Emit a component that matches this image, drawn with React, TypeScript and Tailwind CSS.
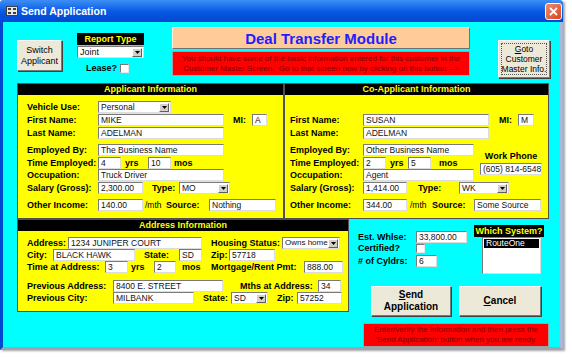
import React from "react";

type P = { className?: string; children?: React.ReactNode };

function Lbl({ className = "", children }: P) {
  return (
    <span className={`shrink-0 whitespace-nowrap text-[9px] font-bold leading-none text-black ${className}`}>
      {children}
    </span>
  );
}

function Txt({ className = "", children }: P) {
  return (
    <span className={`shrink-0 whitespace-nowrap text-[8.5px] leading-none text-black ${className}`}>
      {children}
    </span>
  );
}

function Field({ className = "", children }: P) {
  return (
    <div
      className={`h-full shrink-0 flex items-center overflow-hidden whitespace-nowrap bg-white border border-t-[#7a7a7a] border-l-[#7a7a7a] border-r-[#dcdcdc] border-b-[#dcdcdc] pl-[2px] text-[8.5px] leading-none text-[#111] ${className}`}
    >
      {children}
    </div>
  );
}

function Combo({ className = "", children }: P) {
  return (
    <div
      className={`h-full shrink-0 flex items-center bg-white border border-t-[#7a7a7a] border-l-[#7a7a7a] border-r-[#dcdcdc] border-b-[#dcdcdc] text-[8.5px] leading-none text-[#111] ${className}`}
    >
      <span className="flex-1 pl-[2px] overflow-hidden whitespace-nowrap">{children}</span>
      <span className="h-[9px] w-[10px] shrink-0 mr-[1px] flex items-center justify-center bg-[#d4d0c8] border border-t-white border-l-white border-r-[#606060] border-b-[#606060]">
        <svg width="5" height="3" viewBox="0 0 5 3">
          <path d="M0 0h5L2.5 3z" fill="#000" />
        </svg>
      </span>
    </div>
  );
}

function Check({ className = "" }: P) {
  return (
    <div
      className={`w-[9px] h-[9px] shrink-0 bg-white border border-t-[#7a7a7a] border-l-[#7a7a7a] border-r-[#e8e8e8] border-b-[#e8e8e8] ${className}`}
    />
  );
}

function Row({ className = "", children }: P) {
  return <div className={`flex items-center h-[12px] ${className}`}>{children}</div>;
}

function Header({ children }: P) {
  return (
    <div className="h-[11px] bg-black text-[#ffff00] text-[9px] font-bold leading-[11px] text-center">
      {children}
    </div>
  );
}

function WinButton({ className = "", children }: P) {
  return (
    <div
      className={`shrink-0 flex flex-col items-center justify-center bg-[#ece9d8] border border-t-white border-l-white border-r-[#7a7a7a] border-b-[#7a7a7a] shadow-[1px_1px_0_#404040] text-black ${className}`}
    >
      {children}
    </div>
  );
}

export default function App() {
  return (
    <div className="w-[572px] h-[357px] bg-white font-['Liberation_Sans',Arial,sans-serif]">
      <div className="w-[563px] h-[349px] flex flex-col shadow-[2px_2px_2px_rgba(0,0,0,0.35)]">
        {/* title bar */}
        <div className="h-[22px] shrink-0 flex items-center bg-gradient-to-b from-[#3d8ff5] via-[#0a5ae6] to-[#0047d1] rounded-t-[3px]">
          <svg className="ml-[6px]" width="12" height="10" viewBox="0 0 12 10">
            <rect x="0.5" y="0.5" width="11" height="9" fill="#e8e8e8" stroke="#404040" />
            <rect x="2" y="2" width="3" height="2" fill="#404040" />
            <rect x="7" y="2" width="3" height="2" fill="#404040" />
            <rect x="2" y="6" width="3" height="2" fill="#404040" />
            <rect x="7" y="6" width="3" height="2" fill="#404040" />
          </svg>
          <span className="ml-[3px] text-white text-[10.5px] font-bold leading-none">Send Application</span>
          <div className="ml-auto mr-[1px] w-[17px] h-[17px] flex items-center justify-center rounded-[3px] border border-white bg-gradient-to-br from-[#f08a6a] to-[#d6421c]">
            <svg width="9" height="9" viewBox="0 0 9 9">
              <path d="M1 1l7 7M8 1L1 8" stroke="#fff" strokeWidth="1.8" />
            </svg>
          </div>
        </div>

        {/* client area */}
        <div className="flex-1 flex flex-col bg-[#00ffff] border-l-[3px] border-l-[#0047d1] border-r-[3px] border-r-[#a9b8d8] border-b-[3px] border-b-[#a0a4b0]">
          {/* top strip */}
          <div className="h-[61px] shrink-0 flex items-start pl-[14px]">
            <WinButton className="mt-[18px] w-[45px] h-[31px] text-[9px] leading-[11px]">
              <span>Switch</span>
              <span>Applicant</span>
            </WinButton>

            <div className="ml-[15px] mt-[11px] w-[67px] flex flex-col">
              <div className="h-[12px] bg-black text-[#ffff00] text-[9px] font-bold leading-[12px] text-center">
                Report Type
              </div>
              <div className="h-[12px] mt-[1px]">
                <Combo className="w-[67px] text-[9px]">Joint</Combo>
              </div>
              <div className="mt-[6px] flex items-center pl-[9px]">
                <Lbl>Lease?</Lbl>
                <Check className="ml-[3px]" />
              </div>
            </div>

            <div className="ml-[28px] mt-[5px] w-[298px] flex flex-col">
              <div className="h-[22px] flex items-center justify-center bg-[#ffcc99] border border-t-[#fff2e0] border-l-[#fff2e0] border-r-[#707070] border-b-[#707070] text-[#1e1eff] text-[15px] font-bold leading-none">
                Deal Transfer Module
              </div>
              <div className="mt-[2px] h-[25px] flex flex-col items-center justify-center bg-[#ff0000] border border-[#a0a0a0] text-[#800000] text-[8px] leading-[10px]">
                <span>You should have some of the basic information entered for this customer in the</span>
                <span>Customer Master Screen.&nbsp; Go to that screen now by clicking on this button --&gt;</span>
              </div>
            </div>

            <WinButton className="ml-[28px] mt-[18px] w-[52px] h-[38px] text-[8.5px] leading-[10px]">
              <div className="border border-dotted border-[#555] flex flex-col items-center whitespace-nowrap">
                <span>
                  <span className="underline">G</span>oto
                </span>
                <span>Customer</span>
                <span>Master Info.</span>
              </div>
            </WinButton>
          </div>

          {/* applicant panels */}
          <div className="h-[136px] shrink-0 flex pl-[14px]">
            <div className="w-[267px] h-[136px] flex flex-col border border-[#505050] bg-[#ffff00]">
              <Header>Applicant Information</Header>
              <div className="flex flex-col pl-[9px]">
                <Row className="mt-[6px]">
                  <Lbl className="w-[71px]">Vehicle Use:</Lbl>
                  <Combo className="w-[73px]">Personal</Combo>
                </Row>
                <Row className="mt-[1px]">
                  <Lbl className="w-[71px]">First Name:</Lbl>
                  <Field className="w-[126px]">MIKE</Field>
                  <Lbl className="ml-[9px] w-[19px]">MI:</Lbl>
                  <Field className="w-[15px]">A</Field>
                </Row>
                <Row className="mt-[1px]">
                  <Lbl className="w-[71px]">Last Name:</Lbl>
                  <Field className="w-[126px]">ADELMAN</Field>
                </Row>
                <Row className="mt-[5px]">
                  <Lbl className="w-[71px]">Employed By:</Lbl>
                  <Field className="w-[126px]">The Business Name</Field>
                </Row>
                <Row className="mt-[1px]">
                  <Lbl className="w-[71px]">Time Employed:</Lbl>
                  <Field className="w-[23px]">4</Field>
                  <Lbl className="w-[27px] pl-[4px]">yrs</Lbl>
                  <Field className="w-[23px]">10</Field>
                  <Lbl className="pl-[3px]">mos</Lbl>
                </Row>
                <Row>
                  <Lbl className="w-[71px]">Occupation:</Lbl>
                  <Field className="w-[126px]">Truck Driver</Field>
                </Row>
                <Row className="mt-[1px]">
                  <Lbl className="w-[71px]">Salary (Gross):</Lbl>
                  <Field className="w-[45px]">2,300.00</Field>
                  <Lbl className="ml-[9px] w-[27px]">Type:</Lbl>
                  <Combo className="w-[51px]">MO</Combo>
                </Row>
                <Row className="mt-[5px]">
                  <Lbl className="w-[71px]">Other Income:</Lbl>
                  <Field className="w-[45px]">140.00</Field>
                  <Txt className="w-[23px] pl-[2px]">/mth</Txt>
                  <Lbl className="w-[43px]">Source:</Lbl>
                  <Field className="w-[67px]">Nothing</Field>
                </Row>
              </div>
            </div>

            <div className="w-[265px] h-[136px] flex flex-col border border-[#505050] bg-[#ffff00]">
              <Header>Co-Applicant Information</Header>
              <div className="flex flex-col pl-[5px]">
                <Row className="mt-[19px]">
                  <Lbl className="w-[73px]">First Name:</Lbl>
                  <Field className="w-[126px]">SUSAN</Field>
                  <Lbl className="ml-[10px] w-[19px]">MI:</Lbl>
                  <Field className="w-[16px]">M</Field>
                </Row>
                <Row className="mt-[1px]">
                  <Lbl className="w-[73px]">Last Name:</Lbl>
                  <Field className="w-[126px]">ADELMAN</Field>
                </Row>
                <div className="flex mt-[5px]">
                  <div className="flex flex-col">
                    <Row>
                      <Lbl className="w-[73px]">Employed By:</Lbl>
                      <Field className="w-[111px]">Other Business Name</Field>
                    </Row>
                    <Row className="mt-[1px]">
                      <Lbl className="w-[73px]">Time Employed:</Lbl>
                      <Field className="w-[23px]">2</Field>
                      <Lbl className="w-[22px] pl-[4px]">yrs</Lbl>
                      <Field className="w-[23px]">5</Field>
                      <Lbl className="pl-[8px]">mos</Lbl>
                    </Row>
                    <Row>
                      <Lbl className="w-[73px]">Occupation:</Lbl>
                      <Field className="w-[111px]">Agent</Field>
                    </Row>
                  </div>
                  <div className="ml-[6px] mt-[8px] flex flex-col items-center">
                    <Lbl className="text-[9.5px] h-[10px]">Work Phone</Lbl>
                    <div className="h-[12px] mt-[1px]">
                      <Field className="w-[62px]">(605) 814-6548</Field>
                    </div>
                  </div>
                </div>
                <Row className="mt-[1px]">
                  <Lbl className="w-[73px]">Salary (Gross):</Lbl>
                  <Field className="w-[44px]">1,414.00</Field>
                  <Lbl className="ml-[11px] w-[41px]">Type:</Lbl>
                  <Combo className="w-[50px]">WK</Combo>
                </Row>
                <Row className="mt-[5px]">
                  <Lbl className="w-[73px]">Other Income:</Lbl>
                  <Field className="w-[44px]">344.00</Field>
                  <Txt className="w-[25px] pl-[3px]">/mth</Txt>
                  <Lbl className="w-[42px]">Source:</Lbl>
                  <Field className="w-[67px]">Some Source</Field>
                </Row>
              </div>
            </div>
          </div>

          {/* address + send area */}
          <div className="flex pl-[14px]">
            <div className="w-[332px] h-[93px] shrink-0 flex flex-col border border-[#505050] bg-[#ffff00]">
              <Header>Address Information</Header>
              <div className="flex flex-col pl-[9px]">
                <Row className="mt-[6px]">
                  <Lbl className="w-[41px]">Address:</Lbl>
                  <Field className="w-[134px]">1234 JUNIPER COURT</Field>
                  <Lbl className="ml-[9px] w-[71px]">Housing Status:</Lbl>
                  <Combo className="w-[58px] text-[8px]">Owns home</Combo>
                </Row>
                <Row>
                  <Lbl className="w-[26px]">City:</Lbl>
                  <Field className="w-[82px]">BLACK HAWK</Field>
                  <Lbl className="ml-[9px] w-[35px]">State:</Lbl>
                  <Field className="w-[23px]">SD</Field>
                  <Lbl className="ml-[9px] w-[18px]">Zip:</Lbl>
                  <Field className="w-[46px]">57718</Field>
                </Row>
                <Row>
                  <Lbl className="w-[78px]">Time at Address:</Lbl>
                  <Field className="w-[23px]">3</Field>
                  <Lbl className="w-[26px] pl-[3px]">yrs</Lbl>
                  <Field className="w-[22px]">2</Field>
                  <Lbl className="w-[35px] pl-[6px]">mos</Lbl>
                  <Lbl className="w-[93px]">Mortgage/Rent Pmt:</Lbl>
                  <Field className="w-[39px]">888.00</Field>
                </Row>
                <Row className="mt-[7px]">
                  <Lbl className="w-[86px]">Previous Address:</Lbl>
                  <Field className="w-[110px]">8400 E. STREET</Field>
                  <Lbl className="ml-[17px] w-[78px]">Mths at Address:</Lbl>
                  <Field className="w-[23px]">34</Field>
                </Row>
                <Row>
                  <Lbl className="w-[86px]">Previous City:</Lbl>
                  <Field className="w-[81px]">MILBANK</Field>
                  <Lbl className="ml-[9px] w-[28px]">State:</Lbl>
                  <Combo className="w-[37px]">SD</Combo>
                  <Lbl className="ml-[9px] w-[20px]">Zip:</Lbl>
                  <Field className="w-[45px]">57252</Field>
                </Row>
              </div>
            </div>

            <div className="flex flex-col">
              <div className="flex items-start">
                <div className="ml-[9px] mt-[12px] flex flex-col">
                  <Row>
                    <Lbl className="w-[58px]">Est. Whlse:</Lbl>
                    <Field className="w-[51px]">33,800.00</Field>
                  </Row>
                  <div className="flex items-center h-[11px]">
                    <Lbl className="w-[58px]">Certified?</Lbl>
                    <Check />
                  </div>
                  <Row className="mt-[1px]">
                    <Lbl className="w-[58px]">&#35; of Cyldrs:</Lbl>
                    <Field className="w-[21px]">6</Field>
                  </Row>
                </div>
                <div className="ml-[7px] mt-[6px] flex flex-col">
                  <div className="w-[70px] h-[12px] bg-black text-[#ffff00] text-[9px] font-bold leading-[12px] text-center whitespace-nowrap">
                    Which System?
                  </div>
                  <div className="ml-[8px] w-[59px] h-[37px] bg-white border border-t-[#7a7a7a] border-l-[#7a7a7a] border-r-[#dcdcdc] border-b-[#dcdcdc] p-[1px]">
                    <div className="h-[9px] bg-black text-white text-[8.5px] leading-[9px] pl-[2px]">RouteOne</div>
                  </div>
                </div>
              </div>

              <div className="flex mt-[12px] ml-[22px]">
                <WinButton className="w-[80px] h-[30px] text-[10px] font-bold leading-[12px]">
                  <span>
                    <span className="underline">S</span>end
                  </span>
                  <span>Application</span>
                </WinButton>
                <WinButton className="ml-[8px] w-[82px] h-[30px] text-[10px] font-bold leading-none">
                  <span>
                    <span className="underline">C</span>ancel
                  </span>
                </WinButton>
              </div>

              <div className="ml-[14px] mt-[7px] w-[186px] h-[24px] flex flex-col items-center justify-center bg-[#ff0000] border border-[#a0a0a0] text-[#800000] text-[8px] leading-[10px]">
                <span>Enter/verify the information and then press the</span>
                <span>'Send Application' button when you are ready.</span>
              </div>
            </div>
          </div>
        </div>
      </div>
    </div>
  );
}
